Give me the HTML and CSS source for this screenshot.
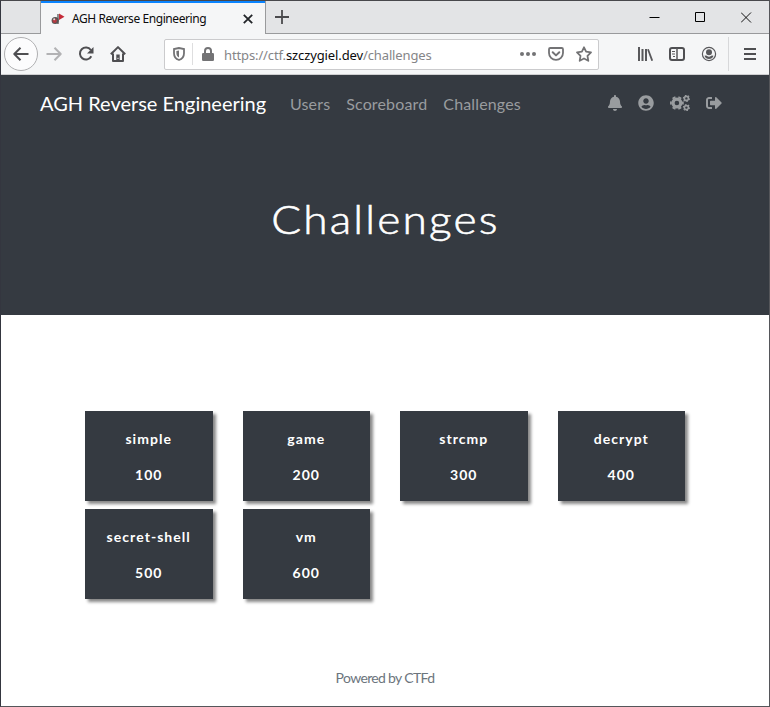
FILE: index.html
```html
<!DOCTYPE html>
<html lang="en">
<head>
<meta charset="utf-8">
<title>AGH Reverse Engineering</title>
<link rel="stylesheet" href="styles.css">
</head>
<body>
<div class="window">
  <div class="tabbar">
    <div class="tab">
      <svg class="favicon" width="14" height="14" viewBox="0 0 14 14"><path d="M7 2v10" stroke="#555" stroke-width="1.3"/><circle cx="4.2" cy="8.5" r="3.6" fill="#555"/><circle cx="3.7" cy="8.7" r="2.2" fill="#b43a42"/><circle cx="3.2" cy="7.3" r="1" fill="#ddd"/><path d="M8 1.6l5.5 3.2L8 8z" fill="#c52b39"/></svg>
      <span class="tab-title">AGH Reverse Engineering</span>
      <svg class="tab-close" width="10" height="10" viewBox="0 0 10 10"><path d="M.8.8l8.4 8.4M9.2.8L.8 9.2" stroke="#222529" stroke-width="1.8"/></svg>
    </div>
    <svg class="new-tab" width="14" height="14" viewBox="0 0 14 14"><path d="M7 0v14M0 7h14" stroke="#4a4a4d" stroke-width="1.8"/></svg>
    <div class="controls">
      <svg width="11" height="11" viewBox="0 0 11 11"><path d="M.5 5.5h10" stroke="#000"/></svg>
      <svg width="11" height="11" viewBox="0 0 11 11"><path d="M.5.5h9v9h-9z" fill="none" stroke="#000"/></svg>
      <svg width="11" height="11" viewBox="0 0 11 11"><path d="M0 .5l10 10M10 .5l-10 10" stroke="#111"/></svg>
    </div>
  </div>
  <div class="toolbar">
    <div class="back"><svg width="16" height="16" viewBox="0 0 16 16"><path d="M15.5 8H1.5M7.5 1.8L1.3 8l6.2 6.2" class="line"/></svg></div>
    <svg class="forward" width="16" height="16" viewBox="0 0 16 16"><path d="M.5 8h14M8.5 1.8L14.7 8l-6.2 6.2" class="line"/></svg>
    <svg class="reload" width="16" height="16" viewBox="0 0 16 16"><path d="M13.3 10.3A6 6 0 1 1 12.8 4" class="line"/><path d="M15.5 1v6.5H9z" fill="#4f4f52"/></svg>
    <svg class="home" width="16" height="16" viewBox="0 0 16 16"><path d="M.8 8.2L8 1.1l7.2 7.1M3 7.5V15h10V7.5" class="line"/><path d="M6.3 8.5h3.4v6.4H6.3z" fill="#4f4f52"/><path d="M8 11.8v1.2" stroke="#fff"/></svg>
    <div class="urlbar">
      <svg class="shield" width="12" height="14" viewBox="0 0 12 14"><path d="M6 1L1 2v4.2C1 9.400 3 12 6 13c3-1 5-3.600 5-6.800V2z" fill="none" stroke="#737375" stroke-width="1.8"/><path d="M6 3.500v7C4.200 9.700 3.400 8 3.400 6V4z" fill="#737375"/></svg>
      <span class="rule"></span>
      <svg class="lock" width="12" height="14" viewBox="0 0 12 14"><path d="M3 7V4a3 3 0 0 1 6 0v3" fill="none" stroke="#737375" stroke-width="2"/><rect y="6" width="12" height="8" rx="1.300" fill="#737375"/></svg>
      <span class="url">https://ctf.<b>szczygiel.dev</b>/challenges</span>
      <svg class="dots" width="16" height="16" viewBox="0 0 16 16" fill="#737375"><circle cx="2" cy="8" r="2"/><circle cx="8" cy="8" r="2"/><circle cx="14" cy="8" r="2"/></svg>
      <svg class="pocket" width="16" height="16" viewBox="0 0 16 16"><path d="M2.300 2h11.400q1.300 0 1.300 1.300V7a7 6.800 0 0 1-14 0V3.300Q1 2 2.300 2z" fill="none" stroke="#737375" stroke-width="1.800"/><path d="M4.700 6.200L8 9.400l3.300-3.200" fill="none" stroke="#737375" stroke-width="2" stroke-linecap="round" stroke-linejoin="round"/></svg>
      <svg class="star" width="16" height="16" viewBox="0 0 16 16"><path d="M8 1.300l2.100 4.300 4.900.7-3.500 3.500.8 5L8 12.500l-4.300 2.300.8-5L1 6.300l4.900-.7z" fill="none" stroke="#737375" stroke-width="1.800" stroke-linejoin="round"/></svg>
    </div>
    <div class="tools">
      <svg width="16" height="16" viewBox="0 0 16 16"><path d="M2 1v14M5.500 3v12M9 3v12" stroke="#58585b" stroke-width="2"/><path d="M11 3.300l4.200 11.500" stroke="#58585b" stroke-width="1.800"/></svg>
      <svg width="16" height="16" viewBox="0 0 16 16"><rect x="1" y="2" width="14" height="12" rx="2" class="line"/><path d="M8 2v12" stroke="#58585b" stroke-width="1.500"/><path d="M3 5.500h3M3 8h3M4 10.500h2" stroke="#58585b"/></svg>
      <svg width="16" height="16" viewBox="0 0 16 16"><circle cx="8" cy="8" r="6.600" fill="none" stroke="#58585b" stroke-width="1.200"/><circle cx="8" cy="6.300" r="3" fill="#58585b"/><path d="M3.500 9.800q1.500-.5 2.300 0Q8 11.500 10.200 9.800q.8-.5 2.300 0Q11.300 13 8 13T3.500 9.800z" fill="#58585b"/></svg>
    </div>
    <span class="divider"></span>
    <svg class="menu" width="12" height="14" viewBox="0 0 12 14"><path d="M0 2h12M0 7h12M0 12h12" stroke="#4f4f52" stroke-width="2"/></svg>
  </div>
  <main class="page">
    <nav class="navbar">
      <span class="brand">AGH Reverse Engineering</span>
      <span class="link">Users</span><span class="link">Scoreboard</span><span class="link">Challenges</span>
      <div class="nav-icons">
        <svg width="14" height="16" viewBox="0 0 448 512"><path d="M224 512c35.320 0 63.970-28.650 63.970-64H160.030c0 35.350 28.650 64 63.970 64zm215.390-149.710c-19.320-20.760-55.470-51.990-55.470-154.290 0-77.700-54.480-139.900-127.940-155.160V32c0-17.670-14.320-32-31.980-32s-31.980 14.330-31.980 32v20.840C118.560 68.100 64.080 130.300 64.080 208c0 102.300-36.150 133.530-55.470 154.290-6 6.450-8.660 14.160-8.610 21.710.11 16.400 12.980 32 32.100 32h383.800c19.120 0 32-15.600 32.100-32 .05-7.550-2.610-15.270-8.610-21.710z"/></svg>
        <svg width="16" height="16" viewBox="0 0 496 512"><path d="M248 8C111 8 0 119 0 256s111 248 248 248 248-111 248-248S385 8 248 8zm0 96c48.600 0 88 39.400 88 88s-39.400 88-88 88-88-39.400-88-88 39.400-88 88-88zm0 344c-58.700 0-111.300-26.600-146.500-68.200 18.800-35.400 55.600-59.800 98.500-59.800 2.400 0 4.800.4 7.100 1.100 13 4.200 26.600 6.900 40.900 6.900 14.300 0 28-2.700 40.900-6.900 2.300-.7 4.700-1.100 7.100-1.100 42.900 0 79.700 24.400 98.500 59.800C359.300 421.400 306.700 448 248 448z"/></svg>
        <svg width="20" height="16" viewBox="0 0 20 16" fill="none" stroke="#999c9f"><circle cx="6.900" cy="8" r="3.900" stroke-width="3.200"/><circle cx="6.900" cy="8" r="6" stroke-width="1.800" pathLength="24" stroke-dasharray="2 2" stroke-dashoffset="1"/><circle cx="16.400" cy="3.400" r="2" stroke-width="1.600"/><circle cx="16.400" cy="3.400" r="3" stroke-width="1.200" pathLength="24" stroke-dasharray="2 2"/><circle cx="16.400" cy="12.600" r="2" stroke-width="1.600"/><circle cx="16.400" cy="12.600" r="3" stroke-width="1.200" pathLength="24" stroke-dasharray="2 2"/></svg>
        <svg width="16" height="16" viewBox="0 0 512 512"><path d="M497 273L329 441c-15 15-41 4.500-41-17v-96H152c-13.300 0-24-10.700-24-24v-96c0-13.300 10.700-24 24-24h136V88c0-21.400 25.900-32 41-17l168 168c9.300 9.400 9.300 24.600 0 34zM192 436v-40c0-6.600-5.400-12-12-12H96c-17.700 0-32-14.300-32-32V160c0-17.700 14.300-32 32-32h84c6.600 0 12-5.400 12-12V76c0-6.600-5.400-12-12-12H96c-53 0-96 43-96 96v192c0 53 43 96 96 96h84c6.600 0 12-5.400 12-12z"/></svg>
      </div>
    </nav>
    <header class="hero"><h1>Challenges</h1></header>
    <section class="grid">
      <div class="card"><p>simple</p><span>100</span></div>
      <div class="card"><p>game</p><span>200</span></div>
      <div class="card"><p>strcmp</p><span>300</span></div>
      <div class="card"><p>decrypt</p><span>400</span></div>
      <div class="card"><p>secret-shell</p><span>500</span></div>
      <div class="card"><p>vm</p><span>600</span></div>
    </section>
    <footer class="footer"><span>Powered by CTFd</span></footer>
  </main>
</div>
</body>
</html>
```
FILE: styles.css
```css
* { box-sizing: border-box; }
body { margin: 0; overflow: hidden; font-family: Lato, sans-serif; }
svg { display: block; flex: none; }
.window { width: 770px; height: 707px; border: 1px solid #55565a; border-left-color: #34363f; border-top-color: #48484c; background: #fff; display: flex; flex-direction: column; }
.line { fill: none; stroke: #4f4f52; stroke-width: 2; stroke-linejoin: round; }

.tabbar { flex: none; height: 33px; display: flex; background: linear-gradient(#999a9c, #999a9c) bottom / 100% 1px no-repeat #e3e4e6; }
.tab { width: 226px; margin-left: 39px; padding-left: 10px; background: #f5f6f7; border: 1px solid #999a9c; border-width: 0 1px; box-shadow: inset 0 2px #0a84ff; display: flex; align-items: center; padding-top: 2px; }
.tab-title { margin-left: 7px; width: 170px; font: 12px/16px "Noto Sans", sans-serif; letter-spacing: -.43px; color: #0c0c0d; white-space: nowrap; }
.tab-close { margin-left: 1px; }
.new-tab { margin: 9px 0 0 9px; }
.controls { display: flex; gap: 35px; margin: 11px 17px 0 auto; }

.toolbar { flex: none; height: 41px; display: flex; align-items: center; background: #f5f6f7; border-bottom: 1px solid #cfcfd1; }
.back { width: 34px; height: 34px; margin-left: 3px; border: 1px solid #b0b0b2; border-radius: 50%; background: #fcfcfd; display: flex; align-items: center; justify-content: center; }
.forward { margin-left: 8px; opacity: .4; }
.reload, .home { margin-left: 16px; }
.urlbar { width: 435px; height: 31px; margin-left: 38px; background: #fff; border: 1px solid #cbcbcd; border-radius: 2px; display: flex; align-items: center; }
.shield { margin-left: 8px; }
.rule { width: 1px; height: 22px; margin: 0 9px 0 7px; background: #dededf; }
.url { margin-left: 10px; width: 296px; font: 13px/18px "Noto Sans", sans-serif; letter-spacing: -.12px; color: #858588; white-space: nowrap; padding-top: 1px; }
.url b { font-weight: 400; color: #0c0c0d; }
.pocket { margin-left: 12px; }
.star { margin-left: 12px; }
.tools { display: flex; gap: 16px; margin-left: 38px; }
.divider { width: 1px; height: 34px; margin-left: 11px; background: #d7d8da; }
.menu { margin-left: 15px; }

.page { flex: 1; display: flex; flex-direction: column; }
.navbar { flex: none; height: 56px; background: #353a41; padding: 0 47px 0 39px; display: flex; align-items: center; }
.brand { width: 250px; font-size: 20px; color: #fff; white-space: nowrap; padding-bottom: 1px; }
.link { font-size: 16px; letter-spacing: .15px; color: #999c9f; margin-right: 16px; }
.nav-icons { display: flex; gap: 16px; margin: 0 0 1px auto; fill: #999c9f; }
.hero { flex: none; height: 184px; background: #353a41; }
.hero h1 { width: fit-content; margin: 0 auto; padding-top: 64px; font: 300 40px/48px Lato, sans-serif; letter-spacing: 2px; color: #fff; -webkit-text-stroke: .6px #fff; transform: scaleX(1.105); }
.grid { display: grid; grid-template-columns: repeat(4, 1fr); column-gap: 30px; row-gap: 8px; margin: 96px 84px 0; }
.card { height: 90px; padding-top: 17px; background: #353a41; box-shadow: 3px 3px 3px #888; text-align: center; color: #fff; font-size: 14px; font-weight: 700; line-height: 21px; letter-spacing: 1.050px; }
.card p { margin: 0 0 15px; }
.card span { display: block; }
.footer { margin-top: 69px; text-align: center; font-size: 14px; line-height: 20px; letter-spacing: -.660px; color: #6c757d; }
```
